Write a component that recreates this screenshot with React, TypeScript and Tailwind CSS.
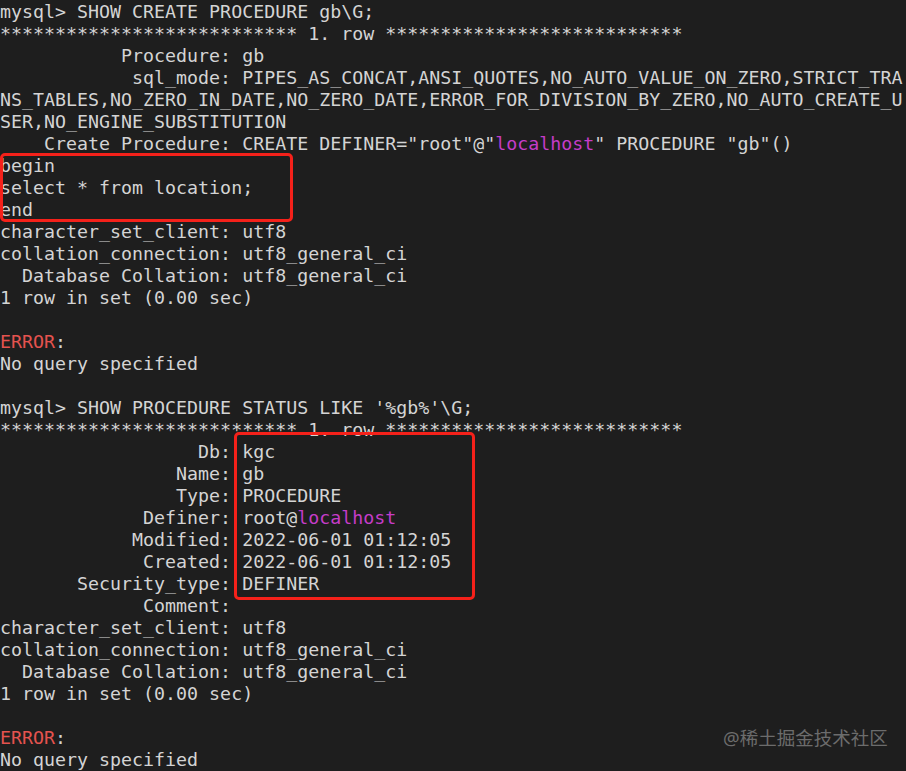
import React from 'react';

type Seg = { t: string; c?: 'host' | 'err' };
type Line = Seg[];

const txt = (t: string): Line => [{ t }];

const lines: Line[] = [
  txt('mysql> SHOW CREATE PROCEDURE gb\\G;'),
  txt('*************************** 1. row ***************************'),
  txt('           Procedure: gb'),
  txt('            sql_mode: PIPES_AS_CONCAT,ANSI_QUOTES,NO_AUTO_VALUE_ON_ZERO,STRICT_TRA'),
  txt('NS_TABLES,NO_ZERO_IN_DATE,NO_ZERO_DATE,ERROR_FOR_DIVISION_BY_ZERO,NO_AUTO_CREATE_U'),
  txt('SER,NO_ENGINE_SUBSTITUTION'),
  [
    { t: '    Create Procedure: CREATE DEFINER="root"@"' },
    { t: 'localhost', c: 'host' },
    { t: '" PROCEDURE "gb"()' },
  ],
  txt('begin'),
  txt('select * from location;'),
  txt('end'),
  txt('character_set_client: utf8'),
  txt('collation_connection: utf8_general_ci'),
  txt('  Database Collation: utf8_general_ci'),
  txt('1 row in set (0.00 sec)'),
  txt(''),
  [{ t: 'ERROR', c: 'err' }, { t: ':' }],
  txt('No query specified'),
  txt(''),
  txt("mysql> SHOW PROCEDURE STATUS LIKE '%gb%'\\G;"),
  txt('*************************** 1. row ***************************'),
  txt('                  Db: kgc'),
  txt('                Name: gb'),
  txt('                Type: PROCEDURE'),
  [{ t: '             Definer: root@' }, { t: 'localhost', c: 'host' }],
  txt('            Modified: 2022-06-01 01:12:05'),
  txt('             Created: 2022-06-01 01:12:05'),
  txt('       Security_type: DEFINER'),
  txt('             Comment: '),
  txt('character_set_client: utf8'),
  txt('collation_connection: utf8_general_ci'),
  txt('  Database Collation: utf8_general_ci'),
  txt('1 row in set (0.00 sec)'),
  txt(''),
  [{ t: 'ERROR', c: 'err' }, { t: ':' }],
  txt('No query specified'),
];

export default function App() {
  return (
    <div className="relative w-[906px] h-[771px] overflow-hidden bg-[#1e1e1e] pt-px text-[#d4d4d4] font-['DejaVu_Sans_Mono',monospace] text-[18.3px]">
      {lines.map((line, i) => (
        <div key={i} className="h-[22px] leading-[22px] whitespace-pre">
          {line.map((s, j) => (
            <span
              key={j}
              className={
                s.c === 'host'
                  ? 'text-[#c53cc8]'
                  : s.c === 'err'
                  ? 'text-[#e5534f]'
                  : ''
              }
            >
              {s.t}
            </span>
          ))}
        </div>
      ))}

      {/* highlight boxes */}
      <div className="absolute left-0 top-[153px] w-[293px] h-[69px] border-[3px] border-[#f5211a] rounded-[5px]" />
      <div className="absolute left-[234px] top-[432px] w-[241px] h-[168px] border-[3px] border-[#f5211a] rounded-[5px]" />

      <div className="absolute left-[723px] top-[727px] text-[18.5px] leading-[22px] text-[#6c6c6c] font-['Noto_Sans','Noto_Sans_CJK_SC',sans-serif]">
        @稀土掘金技术社区
      </div>
    </div>
  );
}
